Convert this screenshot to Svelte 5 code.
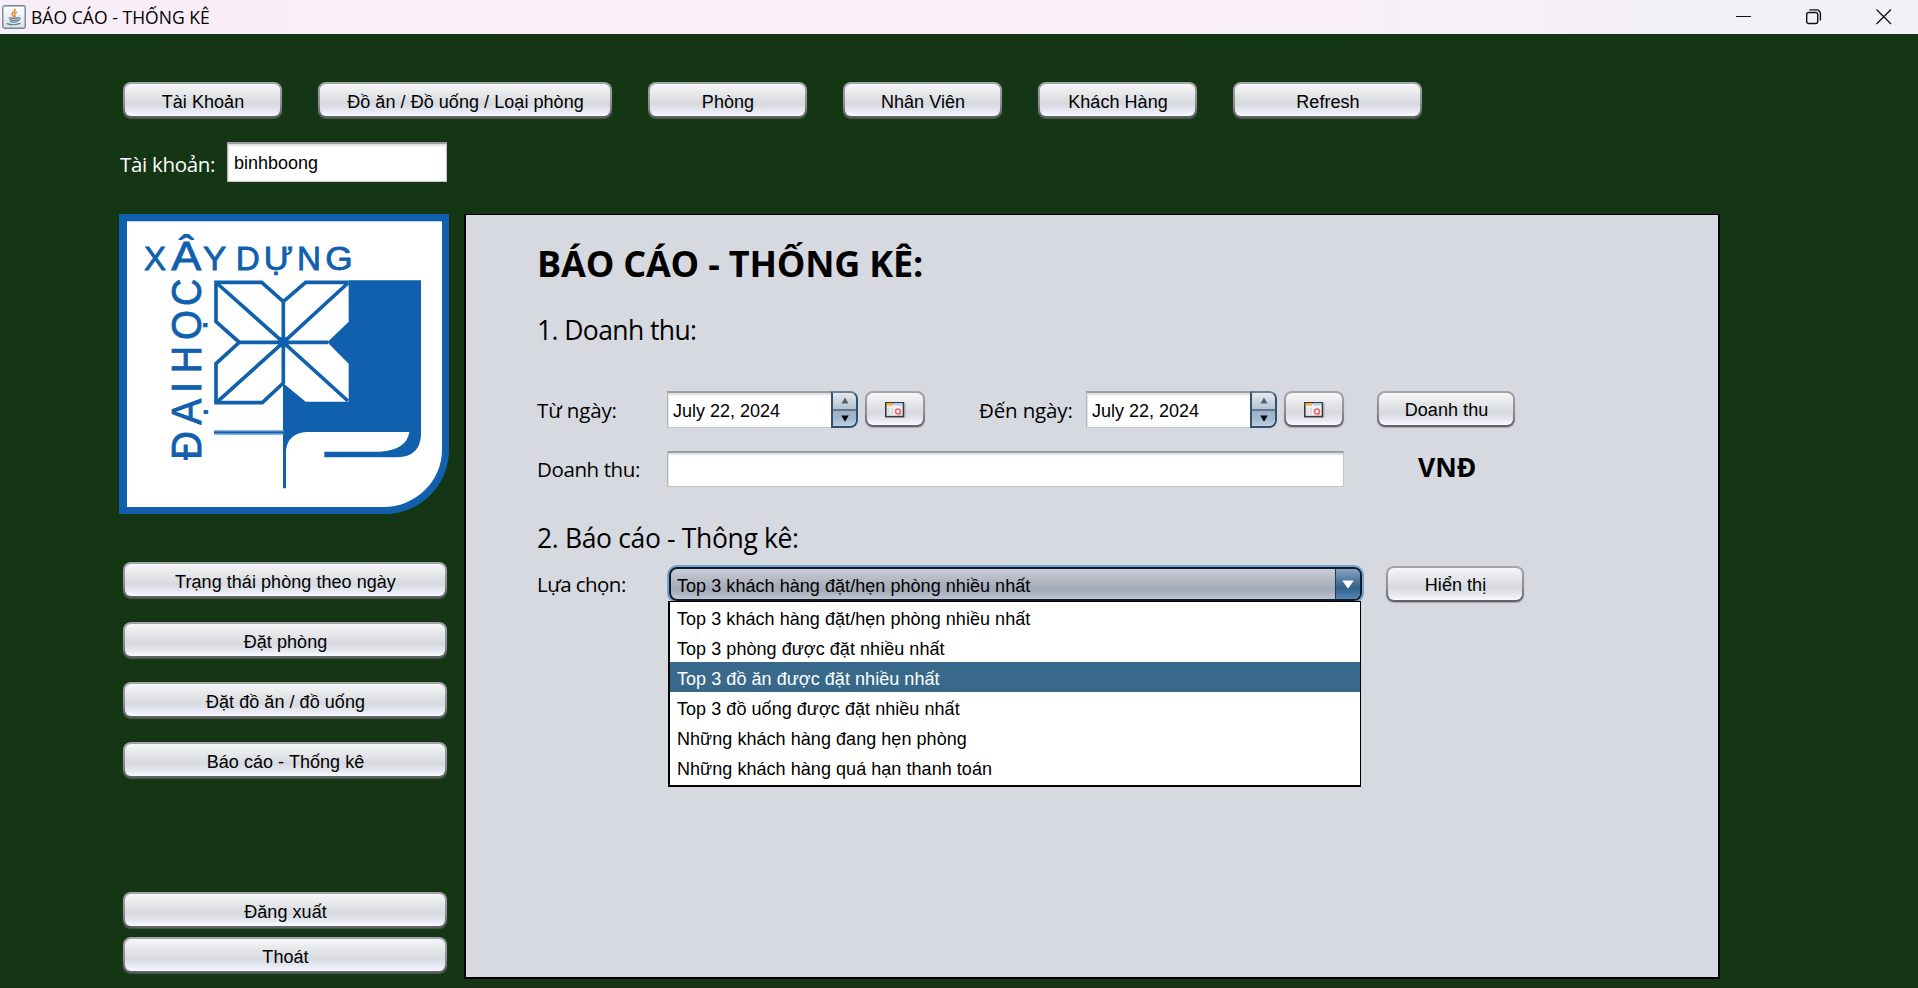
<script>
  const nav = [
    { label: 'Tài Khoản', w: 159 },
    { label: 'Đồ ăn / Đồ uống / Loại phòng', w: 294 },
    { label: 'Phòng', w: 159 },
    { label: 'Nhân Viên', w: 159 },
    { label: 'Khách Hàng', w: 159 },
    { label: 'Refresh', w: 189 }
  ];
  const side = ['Trạng thái phòng theo ngày', 'Đặt phòng', 'Đặt đồ ăn / đồ uống', 'Báo cáo - Thống kê'];
  const foot = ['Đăng xuất', 'Thoát'];
  const options = [
    'Top 3 khách hàng đặt/hẹn phòng nhiều nhất',
    'Top 3 phòng được đặt nhiều nhất',
    'Top 3 đồ ăn được đặt nhiều nhất',
    'Top 3 đồ uống được đặt nhiều nhất',
    'Những khách hàng đang hẹn phòng',
    'Những khách hàng quá hạn thanh toán'
  ];
  const active = 2;
  // glyph, x, baseline, size, drawn width
  const across = [
    ['X', 102, 194, 98, 66], ['Â', 184, 194, 124, 90], ['Y', 279, 194, 98, 70],
    ['D', 377, 194, 98, 72], ['Ự', 461, 194, 98, 88], ['N', 561, 194, 98, 72], ['G', 646, 194, 98, 82]
  ];
  const upward = [
    ['Đ', 764, 86], ['Ạ', 659, 78], ['I', 564, 34], ['H', 505, 82], ['Ọ', 405, 90], ['C', 303, 82]
  ];
</script>

{#snippet dateField()}
  <div class="date">
    <div class="field datebox">July 22, 2024</div>
    <div class="spinner">
      <div class="up"><svg width="8" height="7" viewBox="0 0 8 7"><path d="M4 .5 7.5 6.5H.5Z" fill="#5b5f64" /></svg></div>
      <div class="down"><svg width="8" height="7" viewBox="0 0 8 7"><path d="M.3 .5H7.7L4 6.8Z" fill="#000" /></svg></div>
    </div>
    <button class="btn cal" aria-label="calendar">
      <svg width="21" height="16" viewBox="0 0 21 16">
        <rect x="2" y="1.5" width="19" height="14" fill="#c4c6ca" />
        <rect x=".8" y=".8" width="17.6" height="13.8" fill="#f1f0f2" stroke="#3a3a3c" stroke-width="1.6" />
        <rect x="1.5" y="1" width="6.5" height="2.6" fill="#f0b040" />
        <rect x="9" y="1" width="8.5" height="2.6" fill="#acd0f4" />
        <path d="M3.5 6V14M7 6V14" stroke="#dcdce0" stroke-width="2" />
        <circle cx="13" cy="9.5" r="2.5" fill="#fff" stroke="#e8676c" stroke-width="1.6" />
        <path d="M14 9.5 15.7 7.5V13.5H12.5Z" fill="#e8676c" opacity=".45" />
      </svg>
    </button>
  </div>
{/snippet}

<div class="window">
  <header class="titlebar">
    <svg class="java" width="24" height="24" viewBox="0 0 24 24">
      <defs>
        <linearGradient id="jv" x1="0" y1="0" x2="0" y2="1">
          <stop offset="0" stop-color="#fff" /><stop offset="1" stop-color="#dde0e3" />
        </linearGradient>
      </defs>
      <rect x=".8" y=".8" width="22.4" height="22.4" rx="2" fill="url(#jv)" stroke="#71899d" stroke-width="1.4" />
      <path d="M12.8 4.2c1.8 2-3.2 3-2.7 5 .2 1 1.2 1.4 1 2.6M14.4 7.3c-2.2 1.3-2.4 2-1.4 3.1.6.8 0 1.4-.5 1.7" fill="none" stroke="#ed8338" stroke-width="1.5" stroke-linecap="round" />
      <path d="M7.2 12.6c2 .8 6.6.7 8.7.1M7.8 14.6c2 .8 5.5.7 7.6.1M8.6 16.6c1.8.6 4.6.6 6.2 0M5 18.6c3.4 1.3 9.4 1.2 13-.2M16 12.8c2.8-.8 2.6 2 -.4 3.1" fill="none" stroke="#5d809e" stroke-width="1.2" stroke-linecap="round" />
    </svg>
    <span class="caption">BÁO CÁO - THỐNG KÊ</span>
    <div class="controls">
      <svg width="16" height="16" viewBox="0 0 16 16"><path d="M0 7.5H15" stroke="#111" stroke-width="1" /></svg>
      <svg width="16" height="16" viewBox="0 0 16 16" fill="none" stroke="#111" stroke-width="1.4">
        <rect x=".7" y="3.5" width="11" height="11" rx="2" />
        <path d="M3.4 .9H10.6A3.8 3.8 0 0 1 14.4 4.7V11.6" />
      </svg>
      <svg width="16" height="16" viewBox="0 0 16 16"><path d="M.5 .5 15 15M15 .5 .5 15" stroke="#111" stroke-width="1.3" /></svg>
    </div>
  </header>

  <main>
    <nav>
      {#each nav as n}
        <button class="btn" style="width: {n.w}px">{n.label}</button>
      {/each}
    </nav>

    <div class="account">
      <span class="lbl acc">Tài khoản:</span>
      <div class="field user">binhboong</div>
    </div>

    <div class="body">
      <aside>
        <svg class="logo" width="330" height="300" viewBox="27 27 990 900">
          <path d="M27 27H1017V735A192 192 0 0 1 820 927H27Z" fill="#1160ae" />
          <path d="M51 49H996V735A176 172 0 0 1 820 906H51Z" fill="#fff" />
          <path d="M716 226H933V690Q930 755 862 757H643V740H810Q890 735 898 681H590Q535 684 528 735V850H519V534L587 590H716V476L652 412L716 350Z" fill="#1160ae" />
          <g fill="none" stroke="#1160ae" stroke-width="11">
            <path d="M716 232H587L520 290L455 232H318V350L388 412L318 476V593H457L520 534" />
            <path d="M320 234L520 412L714 588M714 234L520 412L320 592M520 290V536M388 412H654" />
          </g>
          <rect x="312" y="676" width="210" height="13" fill="#5b92c9" />
          <rect x="312" y="680" width="210" height="4" fill="#1160ae" />
          <rect x="504" y="397" width="31" height="30" rx="6" fill="#1160ae" />
          <g fill="#1160ae" stroke="#1160ae" stroke-width="2.5" font-family="'Liberation Sans', Arial, sans-serif">
            {#each across as [c, x, y, s, w]}
              <text {x} {y} font-size={s} textLength={w} lengthAdjust="spacingAndGlyphs">{c}</text>
            {/each}
            {#each upward as [c, y, w]}
              <text transform="translate(274 {y}) rotate(-90)" font-size="126" textLength={w} lengthAdjust="spacingAndGlyphs">{c}</text>
            {/each}
          </g>
        </svg>
        <div class="menu">
          {#each side as s}<button class="btn">{s}</button>{/each}
        </div>
        <div class="foot">
          {#each foot as s}<button class="btn">{s}</button>{/each}
        </div>
      </aside>

      <section class="panel">
        <h1>BÁO CÁO - THỐNG KÊ:</h1>
        <h2 class="h-a">1. Doanh thu:</h2>

        <div class="row dates">
          <span class="lbl first">Từ ngày:</span>
          {@render dateField()}
          <span class="lbl to">Đến ngày:</span>
          {@render dateField()}
          <button class="btn calc">Doanh thu</button>
        </div>

        <div class="row revenue">
          <span class="lbl first rev">Doanh thu:</span>
          <div class="field total"></div>
          <span class="vnd">VNĐ</span>
        </div>

        <h2 class="h-b">2. Báo cáo - Thông kê:</h2>

        <div class="row choose">
          <span class="lbl first sel">Lựa chọn:</span>
          <div class="combo">
            <div class="value">{options[0]}</div>
            <div class="arrow"><svg width="12" height="9" viewBox="0 0 12 9"><path d="M.3 .5H11.7L6 8.8Z" fill="#fff" /></svg></div>
            <ul class="popup">
              {#each options as o, i}
                <li class:active={i === active}>{o}</li>
              {/each}
            </ul>
          </div>
          <button class="btn show">Hiển thị</button>
        </div>
      </section>
    </div>
  </main>
</div>

<style>
  :global(body) { margin: 0; overflow: hidden; }
  .window {
    width: 1918px; height: 988px; box-sizing: border-box;
    display: flex; flex-direction: column;
    background: #153615; border-bottom: 2px solid #153014;
    font: 18px/20px 'Liberation Sans', Arial, sans-serif; color: #000;
  }
  .titlebar {
    height: 34px; flex: none; display: flex; align-items: center;
    box-sizing: border-box; padding: 0 26px 0 2px;
    background: linear-gradient(90deg, #f8eef8 0, #fceef6 45%, #f9eff7 65%, #f3f0f8 90%);
  }
  .caption { margin-left: 5px; font: 17.5px/24px 'Open Sans', sans-serif; letter-spacing: 0.05px; white-space: nowrap; }
  .controls { margin-left: auto; display: flex; gap: 54px; align-items: center; }
  svg { display: block; }
  main { flex: 1; min-height: 0; padding: 48px 0 0 119px; }
  nav { display: flex; gap: 36px; margin-left: 4px; }

  .btn {
    height: 36px; box-sizing: border-box; padding: 3px 0 0 1px; margin: 0;
    display: flex; align-items: center; justify-content: center;
    font: inherit; letter-spacing: 0.05px; color: #000; white-space: nowrap;
    border: 2px solid transparent; border-radius: 8px;
    background:
      linear-gradient(#f6f7f9 0, #e6e8ea 30%, #d6d9df 62%, #e6e9f2 84%, #f8faff 100%) padding-box,
      linear-gradient(#a4a6aa, #8b8d92 60%, #5e6066) border-box;
    box-shadow: 0 1px 1px rgba(120, 124, 132, 0.5);
  }

  .lbl { font: 20.5px/28px 'Open Sans', sans-serif; letter-spacing: -0.15px; white-space: nowrap; }
  .field {
    box-sizing: border-box; background: #fff; white-space: nowrap;
    border: 1px solid #c3c5c8; border-top: 2px solid #9c9ea1; border-left-color: #b4b6b9;
    box-shadow: inset 0 2px 1px #e0e1e3, inset 1px 0 0 #e4e5e8;
    display: flex; align-items: center; padding-left: 6px;
  }
  .account { display: flex; margin-top: 24px; height: 40px; }
  .acc { width: 107px; margin: 8px 0 0 1px; color: #fff; letter-spacing: -0.3px; }
  .user { width: 220px; height: 40px; }

  .body { display: flex; margin-top: 32px; gap: 15px; }
  aside { width: 330px; }
  .menu { display: flex; flex-direction: column; gap: 24px; margin: 48px 2px 0 4px; }
  .foot { display: flex; flex-direction: column; gap: 9px; margin: 114px 2px 0 4px; }

  .panel {
    width: 1256px; height: 765px; box-sizing: border-box; background: #d6d9df;
    border: 2px solid #000; border-top-width: 1px; padding: 25px 0 0 71px;
  }
  h1 { margin: 0; font: bold 36px/48px 'Open Sans', sans-serif; letter-spacing: -0.2px; white-space: nowrap; }
  h2 { margin: 0; font: 26.5px/36px 'Open Sans', sans-serif; letter-spacing: -0.6px; white-space: nowrap; }
  .h-a { margin-top: 24px; }
  .h-b { margin-top: 33px; letter-spacing: -0.35px; }
  .row { display: flex; align-items: flex-start; }
  .first { width: 130px; margin-top: 5px; }
  .dates { margin-top: 43px; }
  .date { display: flex; }
  .datebox { width: 164px; height: 37px; border-right: 0; padding: 1px 0 0 5px; }
  .spinner {
    width: 27px; height: 37px; box-sizing: border-box; overflow: hidden;
    border: 2px solid #34506a; border-top-color: #6b8297; border-radius: 0 8px 8px 0;
    display: flex; flex-direction: column;
  }
  .spinner div { flex: 1; display: flex; align-items: center; justify-content: center; }
  .up { background: linear-gradient(#e4eaf0, #b4c3d1); border-bottom: 2px solid #5f7890; }
  .down { background: linear-gradient(#9db1c6, #a2b8ce 50%, #bcd0e4); }
  .cal { width: 60px; margin-left: 7px; padding-top: 1px; }
  .to { width: 107px; margin: 5px 0 0 54px; }
  .calc { width: 138px; margin-left: 33px; padding-top: 2px; }
  .revenue { margin-top: 23px; }
  .rev { margin-top: 4px; letter-spacing: -0.4px; }
  .total { width: 677px; height: 36px; }
  .vnd { margin: -1px 0 0 74px; font: bold 26.5px/34px 'Open Sans', sans-serif; }
  .choose { margin-top: 10px; }
  .sel { margin-top: 4px; letter-spacing: -0.55px; }
  .combo {
    position: relative; width: 693px; height: 34px; box-sizing: border-box; margin: 1px 0 0 2px;
    display: flex; border: 2px solid #0f1c2a; border-radius: 8px;
    background: linear-gradient(#c9ccd5, #a9afbb 55%, #a3aab8 70%, #bfc5d3);
    box-shadow: 0 0 0 2px #73a4d1;
  }
  .value { flex: 1; padding-left: 6px; line-height: 34px; letter-spacing: 0.05px; white-space: nowrap; }
  .arrow {
    width: 24px; border-left: 1px solid #203b56; border-radius: 0 6px 6px 0;
    display: flex; align-items: center; justify-content: center;
    background: linear-gradient(#87a2bf, #4b7196 45%, #33628c 65%, #5585b4);
  }
  .popup {
    position: absolute; left: -3px; top: 32px; width: 693px; height: 186px; box-sizing: border-box;
    margin: 0; padding: 0; list-style: none; background: #fff;
    border: solid #000; border-width: 1px 1px 2px 2px;
  }
  .popup li { height: 30px; line-height: 34px; padding-left: 7px; letter-spacing: 0.05px; white-space: nowrap; }
  .popup li.active { background: #39698a; color: #fff; }
  .show { width: 138px; margin-left: 24px; padding-top: 2px; }
</style>
